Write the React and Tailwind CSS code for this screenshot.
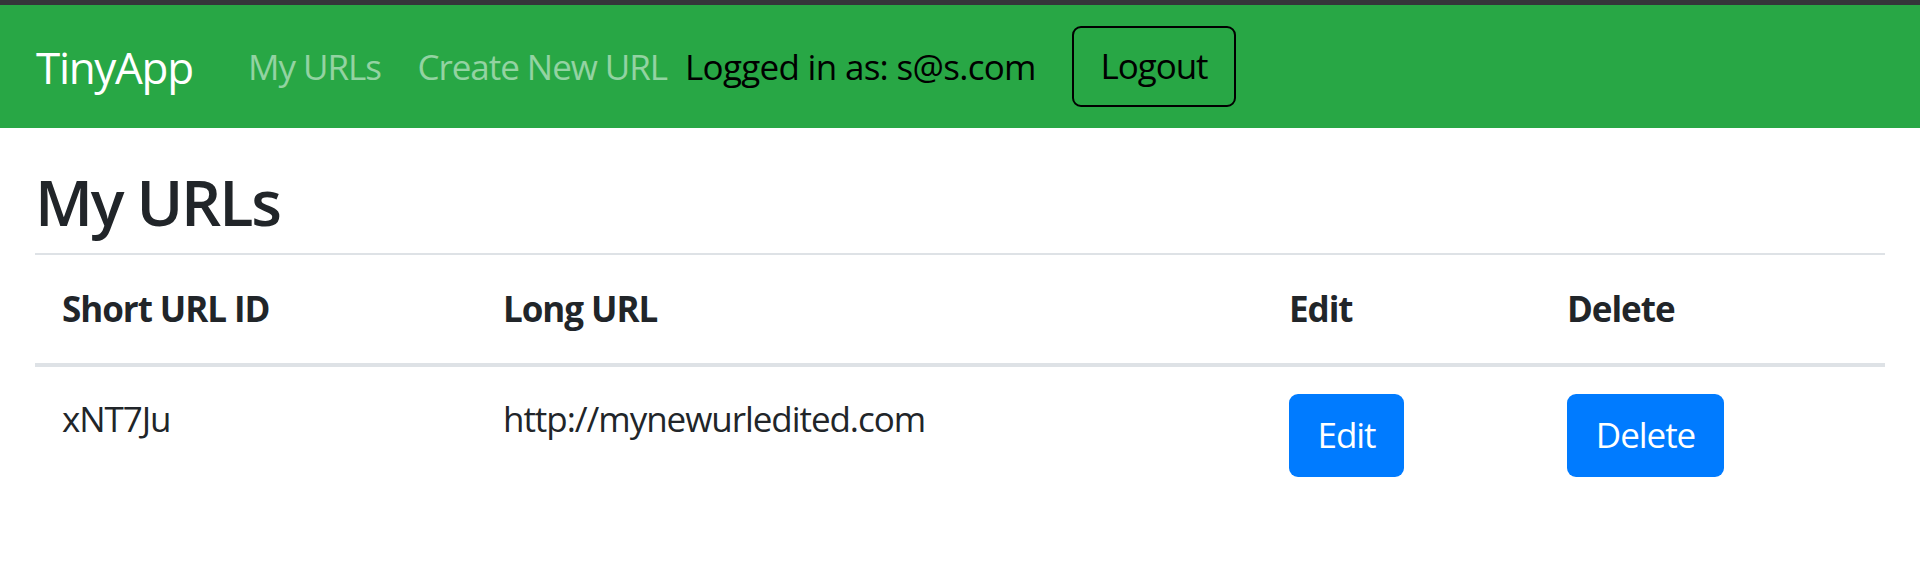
import React from 'react';

const rows = [{ id: 'xNT7Ju', longURL: 'http://mynewurledited.com' }];

export default function App() {
  return (
    <div
      className="min-h-[581px] bg-white text-[35px] tracking-[-0.03em] text-[#212529]"
      style={{ fontFamily: '"Open Sans", "Noto Sans", sans-serif' }}
    >
      <div className="h-[5px] bg-[#35363a]" />
      <nav className="flex h-[123px] items-center whitespace-nowrap bg-[#28a745] px-[36px]">
        <a className="w-[212px] text-[44px] leading-none tracking-[-0.03em] text-white">TinyApp</a>
        <a className="w-[169.5px] leading-none text-white/50">My URLs</a>
        <a className="w-[267.5px] leading-none text-white/50">Create New URL</a>
        <span className="w-[387px] leading-none tracking-[-0.02em] text-black">Logged in as: s@s.com</span>
        <button className="flex h-[81px] w-[164px] items-center justify-center rounded-[9px] border-[2px] border-black text-black">
          Logout
        </button>
      </nav>

      <main className="px-[35px]">
        <h1 className="pt-[36px] pb-[13px] text-[63px] leading-[1.2] font-semibold tracking-[-0.035em]">My URLs</h1>

        <div className="grid grid-cols-[441px_786px_278px_345px] border-t-[2px] border-[#dee2e6]">
          {['Short URL ID', 'Long URL', 'Edit', 'Delete'].map((h) => (
            <div key={h} className="border-b-[4px] border-[#dee2e6] px-[27px] py-[27px] leading-[54px] font-bold">
              {h}
            </div>
          ))}

          {rows.map((r) => (
            <React.Fragment key={r.id}>
              <div className="px-[27px] py-[25px] leading-[54px]">{r.id}</div>
              <div className="px-[27px] py-[25px] leading-[54px]">{r.longURL}</div>
              <div className="px-[27px] py-[27px]">
                <button className="flex h-[83px] w-[115px] items-center justify-center rounded-[9px] bg-[#007bff] text-white">
                  Edit
                </button>
              </div>
              <div className="px-[27px] py-[27px]">
                <button className="flex h-[83px] w-[157px] items-center justify-center rounded-[9px] bg-[#007bff] text-white">
                  Delete
                </button>
              </div>
            </React.Fragment>
          ))}
        </div>
      </main>
    </div>
  );
}
